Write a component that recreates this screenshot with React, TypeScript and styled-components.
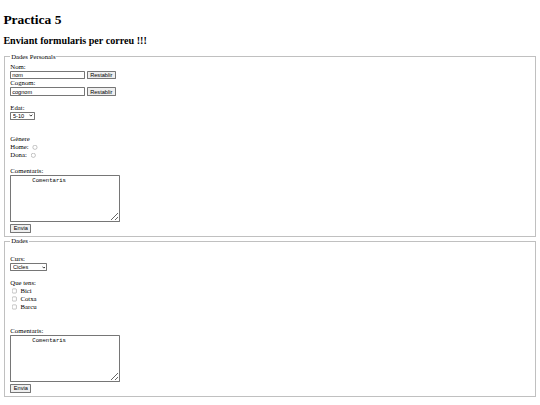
import React from "react";
import styled, { createGlobalStyle } from "styled-components";

const Global = createGlobalStyle`
  html, body { margin: 0; padding: 0; background: #fff; }
  body { font-family: "Liberation Serif", "Times New Roman", serif; color: #000; }
`;

const Page = styled.div`
  zoom: 0.421875;
  padding: 8px;
  font-size: 16px;
`;

const Title = styled.h1`
  font-size: 32px;
  font-weight: bold;
  line-height: 37px;
  margin: 21px 0 18px;
`;

const Subtitle = styled.h2`
  font-size: 24px;
  font-weight: bold;
  line-height: 27px;
  margin: 0 0 14px;
`;

const Form = styled.form`
  margin: 0;
  line-height: 18.6px;
`;

const Fieldset = styled.fieldset`
  margin: 0 2px;
  padding: 5px 12px 9px;
  border: 2px groove rgb(192, 192, 192);
  min-inline-size: min-content;
`;

const Legend = styled.legend`
  padding: 0 2px;
`;

const control = `
  font-family: "Liberation Sans", Arial, sans-serif;
  font-size: 13.3333px;
  color: #000;
  border: 1px solid #767676;
  border-radius: 2px;
  line-height: normal;
`;

const TextInput = styled.input`
  ${control}
  box-sizing: border-box;
  width: 177px;
  height: 21px;
  padding: 1px 2px;
  background: #fff;
`;

const Button = styled.input`
  ${control}
  background: #efefef;
  padding: 1px 6px;
  height: 21px;
`;

const SelectWrap = styled.span`
  position: relative;
  display: inline-block;
`;

const Select = styled.select<{ $w: number }>`
  ${control}
  appearance: none;
  -webkit-appearance: none;
  background: #fff;
  box-sizing: border-box;
  width: ${(p) => p.$w}px;
  height: 19px;
  padding: 0 18px 0 4px;
`;

const Chevron = styled.svg`
  position: absolute;
  right: 5px;
  top: 6px;
  width: 9px;
  height: 7px;
  pointer-events: none;
`;

const Choice = styled.input`
  vertical-align: -2px;
`;

const Comments = styled.textarea`
  font-family: "Liberation Mono", "Courier New", monospace;
  font-size: 13.3333px;
  line-height: normal;
  box-sizing: border-box;
  width: 261px;
  height: 112px;
  padding: 2px;
  border: 1px solid #767676;
  border-radius: 2px;
`;

function Dropdown({ width, value, options }: { width: number; value: string; options: string[] }) {
  return (
    <SelectWrap>
      <Select $w={width} defaultValue={value}>
        {options.map((o) => (
          <option key={o}>{o}</option>
        ))}
      </Select>
      <Chevron viewBox="0 0 9 7">
        <path d="M1 1.5 L4.5 5 L8 1.5" fill="none" stroke="#000" strokeWidth="1.8" />
      </Chevron>
    </SelectWrap>
  );
}

export default function App() {
  return (
    <>
      <Global />
      <Page>
        <Title>Practica 5</Title>
        <Subtitle>Enviant formularis per correu !!!</Subtitle>
        <Form onSubmit={(e) => e.preventDefault()}>
          <Fieldset>
            <Legend>Dades Personals</Legend>
            Nom:
            <br />
            <TextInput type="text" defaultValue="nom" /> <Button type="reset" value="Restablir" />
            <br />
            Cognom:
            <br />
            <TextInput type="text" defaultValue="cognom" /> <Button type="reset" value="Restablir" />
            <br />
            <br />
            Edat:
            <br />
            <Dropdown width={59} value="5-10" options={["5-10", "10-20", "20-40"]} />
            <br />
            <br />
            <br />
            Gènere
            <br />
            Home: <Choice type="radio" name="genere" />
            <br />
            Dona: <Choice type="radio" name="genere" />
            <br />
            <br />
            Comentaris:
            <br />
            <Comments defaultValue={"      Comentaris"} />
            <br />
            <Button type="submit" value="Envia" />
          </Fieldset>
          <Fieldset>
            <Legend>Dades</Legend>
            <br />
            Curs:
            <br />
            <Dropdown width={88} value="Cicles" options={["Cicles", "Batxillerat"]} />
            <br />
            <br />
            Que tens:
            <br />
            <Choice type="checkbox" /> Bici
            <br />
            <Choice type="checkbox" /> Cotxa
            <br />
            <Choice type="checkbox" /> Barcu
            <br />
            <br />
            <br />
            Comentaris:
            <br />
            <Comments defaultValue={"      Comentaris"} />
            <br />
            <Button type="submit" value="Envia" />
          </Fieldset>
        </Form>
      </Page>
    </>
  );
}
